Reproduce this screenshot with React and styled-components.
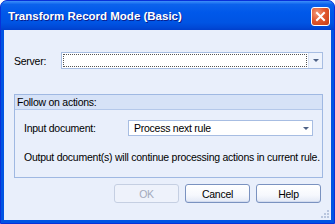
import React from 'react';
import styled, { createGlobalStyle } from 'styled-components';

const GlobalStyle = createGlobalStyle`
  html, body {
    margin: 0;
    padding: 0;
    background: #ffffff;
  }
  body {
    font-family: 'Liberation Sans', Arial, sans-serif;
    font-size: 10.5px;
    letter-spacing: -0.25px;
    color: #000000;
  }
`;

const Window = styled.div`
  position: relative;
  width: 335px;
  height: 224px;
  box-sizing: border-box;
  display: flex;
  flex-direction: column;
  background: #0054e3;
  border-radius: 7px 7px 0 0;
  border: 1px solid #0831d9;
  overflow: hidden;
`;

const TitleBar = styled.div`
  height: 29px;
  display: flex;
  align-items: center;
  justify-content: space-between;
  padding: 0 4px 0 7px;
  background: linear-gradient(
    #3d8ffa 0%,
    #0b62ec 12%,
    #0058ea 40%,
    #0054e3 75%,
    #0048d6 92%,
    #003fcc 100%
  );
`;

const Title = styled.span`
  font-family: 'Liberation Sans', Arial, sans-serif;
  font-weight: bold;
  font-size: 11.5px;
  letter-spacing: 0;
  color: #ffffff;
  text-shadow: 1px 1px 0 #0a1e8c;
  padding-top: 1px;
`;

const CloseButton = styled.div`
  width: 19px;
  height: 19px;
  box-sizing: border-box;
  border: 1px solid #ffffff;
  border-radius: 3px;
  background: radial-gradient(circle at 30% 30%, #f09a7a 0%, #e2582f 45%, #c53c12 100%);
  display: flex;
  align-items: center;
  justify-content: center;
  margin-top: 1px;
`;

const Client = styled.div`
  position: relative;
  flex: 1;
  margin: 0 3px 3px 3px;
  background: #e9effb;
  display: flex;
  flex-direction: column;
  padding: 22px 8px 0 10px;
`;

const FieldRow = styled.div`
  display: flex;
  align-items: center;
`;

const Label = styled.span`
  width: ${(p) => p.width}px;
  flex-shrink: 0;
`;

const Combo = styled.div`
  flex: 1;
  height: ${(p) => p.height}px;
  box-sizing: border-box;
  display: flex;
  border: 1px solid #a7bde2;
  background: #ffffff;
`;

const ComboText = styled.div`
  flex: 1;
  display: flex;
  align-items: center;
  padding-left: 3px;
  margin: 1px;
  border: 1px ${(p) => (p.focused ? 'dotted #555555' : 'solid transparent')};
`;

const ComboArrow = styled.div`
  width: 13px;
  display: flex;
  align-items: center;
  justify-content: center;
  background: ${(p) => (p.tinted ? '#eef3fc' : '#ffffff')};
  border-left: 1px solid ${(p) => (p.tinted ? '#d8e2f5' : '#ffffff')};
`;

const Arrow = styled.span`
  width: 0;
  height: 0;
  border-left: 3px solid transparent;
  border-right: 3px solid transparent;
  border-top: 3px solid #4d6185;
`;

const GroupBox = styled.div`
  margin-top: 25px;
  border: 1px solid #9fb8e2;
  display: flex;
  flex-direction: column;
`;

const GroupHeader = styled.div`
  height: 14px;
  display: flex;
  align-items: center;
  padding-left: 2px;
  background: #d6e2f7;
  border-bottom: 1px solid #b4c8ea;
`;

const GroupBody = styled.div`
  display: flex;
  flex-direction: column;
  padding: 10px 9px 13px 9px;
  gap: 15px;
`;

const Note = styled.div`
  white-space: nowrap;
  height: 13px;
  line-height: 13px;
`;

const ButtonRow = styled.div`
  display: flex;
  justify-content: flex-end;
  gap: 6px;
  margin-top: 6px;
  padding-right: 2px;
`;

const Button = styled.div`
  width: 65px;
  height: 19px;
  box-sizing: border-box;
  display: flex;
  align-items: center;
  justify-content: center;
  border-radius: 3px;
  border: 1px solid ${(p) => (p.disabled ? '#c5cfe2' : '#7a92c0')};
  color: ${(p) => (p.disabled ? '#a3aabb' : '#000000')};
  background: ${(p) =>
    p.disabled
      ? '#eef2fb'
      : 'linear-gradient(#ffffff 0%, #f6f8fd 60%, #e3e9f6 100%)'};
  box-shadow: ${(p) => (p.disabled ? 'none' : 'inset 0 -1px 0 #d3dcef')};
`;

const SizeGrip = styled.svg`
  position: absolute;
  right: 1px;
  bottom: 1px;
`;

export default function App() {
  return (
    <>
      <GlobalStyle />
      <Window>
        <TitleBar>
          <Title>Transform Record Mode (Basic)</Title>
          <CloseButton>
            <svg width="11" height="11" viewBox="0 0 11 11">
              <path d="M2 2 L9 9 M9 2 L2 9" stroke="#ffffff" strokeWidth="2" strokeLinecap="square" />
            </svg>
          </CloseButton>
        </TitleBar>
        <Client>
          <FieldRow>
            <Label width={47}>Server:</Label>
            <Combo height={17}>
              <ComboText focused />
              <ComboArrow tinted>
                <Arrow />
              </ComboArrow>
            </Combo>
          </FieldRow>
          <GroupBox>
            <GroupHeader>Follow on actions:</GroupHeader>
            <GroupBody>
              <FieldRow>
                <Label width={104}>Input document:</Label>
                <Combo height={16}>
                  <ComboText>Process next rule</ComboText>
                  <ComboArrow>
                    <Arrow />
                  </ComboArrow>
                </Combo>
              </FieldRow>
              <Note>Output document(s) will continue processing actions in current rule.</Note>
            </GroupBody>
          </GroupBox>
          <ButtonRow>
            <Button disabled>OK</Button>
            <Button>Cancel</Button>
            <Button>Help</Button>
          </ButtonRow>
          <SizeGrip width="10" height="10" viewBox="0 0 10 10">
            {[
              [8, 2], [8, 5], [5, 5], [8, 8], [5, 8], [2, 8],
            ].map(([x, y]) => (
              <rect key={`${x}-${y}`} x={x - 1} y={y - 1} width="2" height="2" fill="#b9c6de" />
            ))}
          </SizeGrip>
        </Client>
      </Window>
    </>
  );
}
